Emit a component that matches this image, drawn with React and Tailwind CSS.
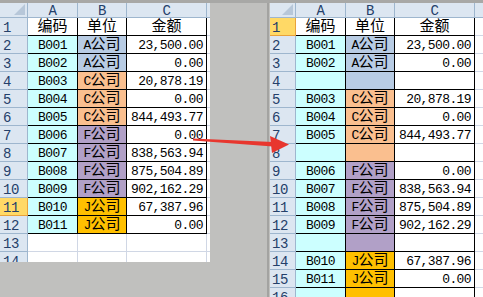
import React from 'react';

const fills = {
  w: 'bg-white',
  cy: 'bg-[#ccffff]',
  a: 'bg-[#b8cce4]',
  c: 'bg-[#fabf8f]',
  f: 'bg-[#b1a0c7]',
  j: 'bg-[#ffc000]',
};

const units = { a: 'A', c: 'C', f: 'F', j: 'J' };

// [code, unit, amount] — empty code = blank inserted row
const leftRows = [
  ['B001', 'a', '23,500.00'],
  ['B002', 'a', '0.00'],
  ['B003', 'c', '20,878.19'],
  ['B004', 'c', '0.00'],
  ['B005', 'c', '844,493.77'],
  ['B006', 'f', '0.00'],
  ['B007', 'f', '838,563.94'],
  ['B008', 'f', '875,504.89'],
  ['B009', 'f', '902,162.29'],
  ['B010', 'j', '67,387.96'],
  ['B011', 'j', '0.00'],
];

const rightRows = [
  ['B001', 'a', '23,500.00'],
  ['B002', 'a', '0.00'],
  ['', 'a', ''],
  ['B003', 'c', '20,878.19'],
  ['B004', 'c', '0.00'],
  ['B005', 'c', '844,493.77'],
  ['', 'c', ''],
  ['B006', 'f', '0.00'],
  ['B007', 'f', '838,563.94'],
  ['B008', 'f', '875,504.89'],
  ['B009', 'f', '902,162.29'],
  ['', 'f', ''],
  ['B010', 'j', '67,387.96'],
  ['B011', 'j', '0.00'],
];

const Han = ({ children }) => <span className="text-[15px] tracking-normal">{children}</span>;

const RowHead = ({ n, w, hi, pad }) => (
  <div
    className={`${w} h-[18px] shrink-0 flex items-center ${pad} pt-[2px] border-r border-b text-[14px] tracking-[-0.5px] text-[#24406a] ${
      hi ? 'bg-[#ffd966] border-[#e9a23b]' : 'bg-[#dce6f1] border-[#9eb6ce]'
    }`}
  >
    {n}
  </div>
);

const Sheet = ({ widths, pad, rows, hiRow, tail, tailH, hiHeader }) => {
  const [wh, wa, wb, wc, wx] = widths;
  return (
    <div className="flex flex-col bg-white">
      {/* column letters */}
      <div className="flex h-[15px] shrink-0">
        <div className={`${wh} relative shrink-0 bg-[#dce6f1] border-r border-b border-[#9eb6ce]`}>
          <svg className="absolute right-[2px] bottom-[2px]" width="11" height="11" viewBox="0 0 11 11">
            <polygon points="11,0 11,11 0,11" fill="#b7c7d9" />
          </svg>
        </div>
        {[['A', wa], ['B', wb], ['C', wc]].map(([l, w]) => (
          <div
            key={l}
            className={`${w} shrink-0 flex items-center justify-center pt-[1px] bg-[#dce6f1] border-r border-b border-[#9eb6ce] text-[14px] text-[#24406a]`}
          >
            {l}
          </div>
        ))}
        <div className={`${wx} shrink-0 bg-[#dce6f1] border-b border-[#9eb6ce]`} />
      </div>

      {/* row 1 titles */}
      <div className="flex h-[18px] shrink-0">
        <RowHead n="1" w={wh} hi={hiHeader} pad={pad} />
        {[['编码', wa], ['单位', wb], ['金额', wc]].map(([t, w]) => (
          <div key={t} className={`${w} shrink-0 flex items-center justify-center pt-[2px] bg-white border-r border-b border-black`}>
            <Han>{t}</Han>
          </div>
        ))}
        <div className={`${wx} shrink-0 border-b border-[#d0d7e5]`} />
      </div>

      {rows.map(([code, u, amt], i) => (
        <div key={i} className="flex h-[18px] shrink-0">
          <RowHead n={i + 2} w={wh} hi={hiRow === i + 2} pad={pad} />
          <div className={`${wa} shrink-0 flex items-center justify-center pt-[2px] ${fills.cy} border-r border-b border-black`}>
            {code}
          </div>
          <div className={`${wb} shrink-0 flex items-center justify-center pt-[2px] ${fills[u]} border-r border-b border-black`}>
            {code && (
              <>
                {units[u]}
                <Han>公司</Han>
              </>
            )}
          </div>
          <div className={`${wc} shrink-0 flex items-center justify-end pr-[3px] pt-[2px] whitespace-nowrap bg-white border-r border-b border-black`}>
            {amt}
          </div>
          <div className={`${wx} shrink-0 border-b border-[#d0d7e5]`} />
        </div>
      ))}

      {tail.map((t, i) => (
        <div key={i} className={`flex shrink-0 overflow-hidden ${i === tail.length - 1 ? tailH : 'h-[18px]'}`}>
          <div className="h-[18px] flex shrink-0">
            <RowHead n={rows.length + 2 + i} w={wh} pad={pad} />
            <div className={`${wa} shrink-0 ${t.a} border-r border-b ${t.line}`} />
            <div className={`${wb} shrink-0 ${t.b} border-r border-b ${t.line}`} />
            <div className={`${wc} shrink-0 bg-white border-r border-b ${t.line}`} />
            <div className={`${wx} shrink-0 border-b border-[#d0d7e5]`} />
          </div>
        </div>
      ))}
    </div>
  );
};

export default function App() {
  return (
    <div className="relative w-[483px] h-[297px] overflow-hidden bg-[#c0c0be] font-['Liberation_Mono','Noto_Sans_CJK_SC',monospace] text-[13px] leading-none tracking-[-0.6px] text-black">
      <div className="absolute top-0 left-0 w-full h-[3px] bg-[#a8a8a6]" />
      <div className="flex items-start pt-[3px]">
        <Sheet
          widths={['w-[28px]', 'w-[50px]', 'w-[49px]', 'w-[80px]', 'w-[3px]']}
          pad="pl-[3px]"
          rows={leftRows}
          hiRow={11}
          tail={[
            { a: 'bg-white', b: 'bg-white', line: 'border-[#d0d7e5]' },
            { a: 'bg-white', b: 'bg-white', line: 'border-[#d0d7e5]' },
          ]}
          tailH="h-[10px]"
        />
        <div className="w-[57px] shrink-0" />
        <div className="w-[3px] shrink-0 border-l-2 border-[#a3a3a1] -mt-[3px] h-[297px]" />
        <Sheet
          widths={['w-[26px]', 'w-[50px]', 'w-[49px]', 'w-[80px]', 'w-[8px]']}
          pad="pl-[2px]"
          rows={rightRows}
          hiHeader
          tail={[{ a: fills.cy, b: fills.j, line: 'border-black' }]}
          tailH="h-[9px]"
        />
      </div>

      {/* red arrow */}
      <svg className="absolute left-0 top-0 pointer-events-none" width="483" height="297" viewBox="0 0 483 297">
        <polygon points="193,138.5 273,142 273,146.5 193,140.5" fill="#e8362e" />
        <polygon points="270,136 289,144.5 272,153" fill="#e8362e" />
      </svg>
    </div>
  );
}
